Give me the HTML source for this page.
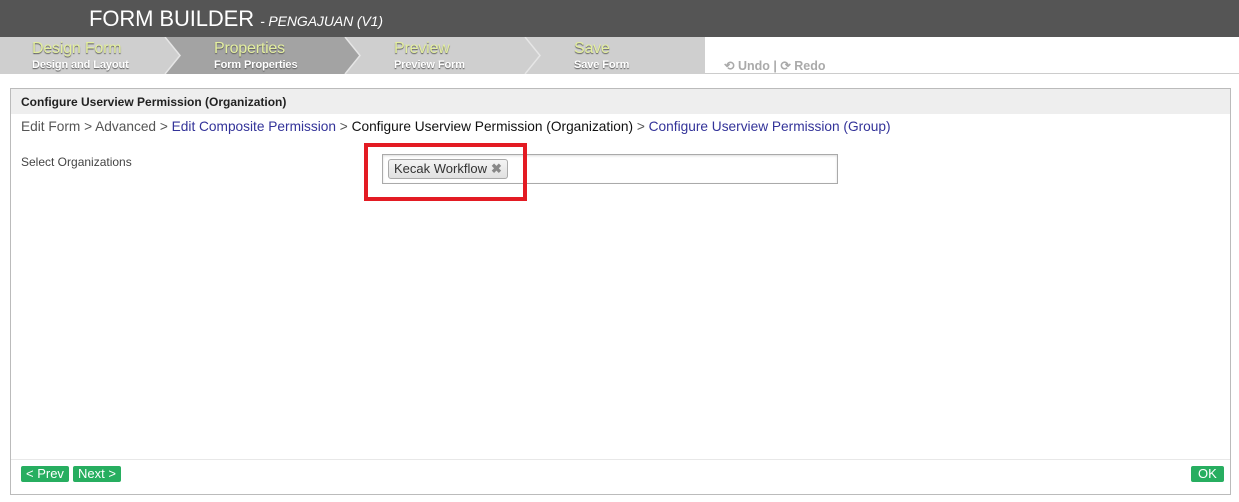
<!DOCTYPE html>
<html><head><style>
body{margin:0;width:1239px;height:502px;background:#fff;font-family:"Liberation Sans",sans-serif;position:relative;overflow:hidden}
.hdr{position:absolute;left:0;top:0;width:1239px;height:37px;background:#555}
.hdr .t{position:absolute;left:89px;top:6px;color:#fff;font-size:22px;letter-spacing:-0.1px}
.hdr .t i{font-size:14px}
.tabs{position:absolute;left:0;top:37px}
.tl{position:absolute;color:#e4efa0;font-size:16px;text-shadow:0 1px 1px #555;letter-spacing:-0.2px}
.ts{position:absolute;color:#fff;font-size:11px;font-weight:bold;text-shadow:0 1px 1px #555;letter-spacing:-0.1px}
.undo{position:absolute;left:724px;top:58px;color:#aaa;font-size:12.5px;font-weight:bold}
.line{position:absolute;left:705px;top:73px;width:534px;height:1px;background:#ccc}
.panel{position:absolute;left:10px;top:88px;width:1219px;height:405px;border:1px solid #bbb}
.ph{height:25px;background:#eee;font-size:12px;font-weight:bold;color:#222;padding-left:10px;line-height:27px}
.bc{position:absolute;left:10px;top:30px;font-size:13.7px;color:#555;white-space:nowrap}
.bc b{font-weight:normal;color:#333399}.bc .c{color:#111}
.lab{position:absolute;left:10px;top:66px;font-size:12px;color:#444}
.inp{position:absolute;left:371px;top:65px;width:454px;height:28px;border:1px solid #aaa;box-shadow:inset 0 1px 2px #ddd}
.chip{position:absolute;left:5px;top:4px;height:18px;border:1px solid #aaa;border-radius:3px;background:linear-gradient(#f4f4f4,#e0e0e0);font-size:13px;color:#333;padding:0 5px;line-height:18px}
.chip span{color:#888;font-weight:bold;margin-left:4px}
.red{position:absolute;left:364px;top:143px;width:155px;height:50px;border:4px solid #e31b23}
.foot{position:absolute;left:0;top:370px;width:1219px;height:1px;background:#e8e8e8}
.btn{position:absolute;top:377px;height:16px;background:#27ae60;color:#fff;font-size:13px;line-height:16px;border-radius:2px;padding:0 5px}
</style></head><body>
<div class="hdr"><div class="t">FORM BUILDER <i>- PENGAJUAN (V1)</i></div></div>
<svg class="tabs" width="705" height="37">
<rect width="705" height="37" fill="#cfcfcf"/>
<polygon points="165,0 345,0 360,18.5 345,37 165,37 180,18.5" fill="#a3a3a3"/>
<polyline points="165,0 180,18.5 165,37" fill="none" stroke="#e6e6e6" stroke-width="1.5"/>
<polyline points="345,0 360,18.5 345,37" fill="none" stroke="#e6e6e6" stroke-width="1.5"/>
<polyline points="525,0 540,18.5 525,37" fill="none" stroke="#e6e6e6" stroke-width="1.5"/>
</svg>
<div class="tl" style="left:32px;top:40px">Design Form</div><div class="ts" style="left:32px;top:59px">Design and Layout</div>
<div class="tl" style="left:214px;top:40px">Properties</div><div class="ts" style="left:214px;top:59px">Form Properties</div>
<div class="tl" style="left:394px;top:40px">Preview</div><div class="ts" style="left:394px;top:59px">Preview Form</div>
<div class="tl" style="left:574px;top:40px">Save</div><div class="ts" style="left:574px;top:59px">Save Form</div>
<div class="undo">⟲ Undo | ⟳ Redo</div>
<div class="line"></div>
<div class="panel">
<div class="ph">Configure Userview Permission (Organization)</div>
<div class="bc">Edit Form &gt; Advanced &gt; <b>Edit Composite Permission</b> &gt; <span class="c">Configure Userview Permission (Organization)</span> &gt; <b>Configure Userview Permission (Group)</b></div>
<div class="lab">Select Organizations</div>
<div class="inp"><div class="chip">Kecak Workflow<span>✖</span></div></div>
<div class="foot"></div>
<div class="btn" style="left:10px">&lt; Prev</div>
<div class="btn" style="left:62px">Next &gt;</div>
<div class="btn" style="left:1180px;padding:0 7px">OK</div>
</div>
<div class="red"></div>
</body></html>
